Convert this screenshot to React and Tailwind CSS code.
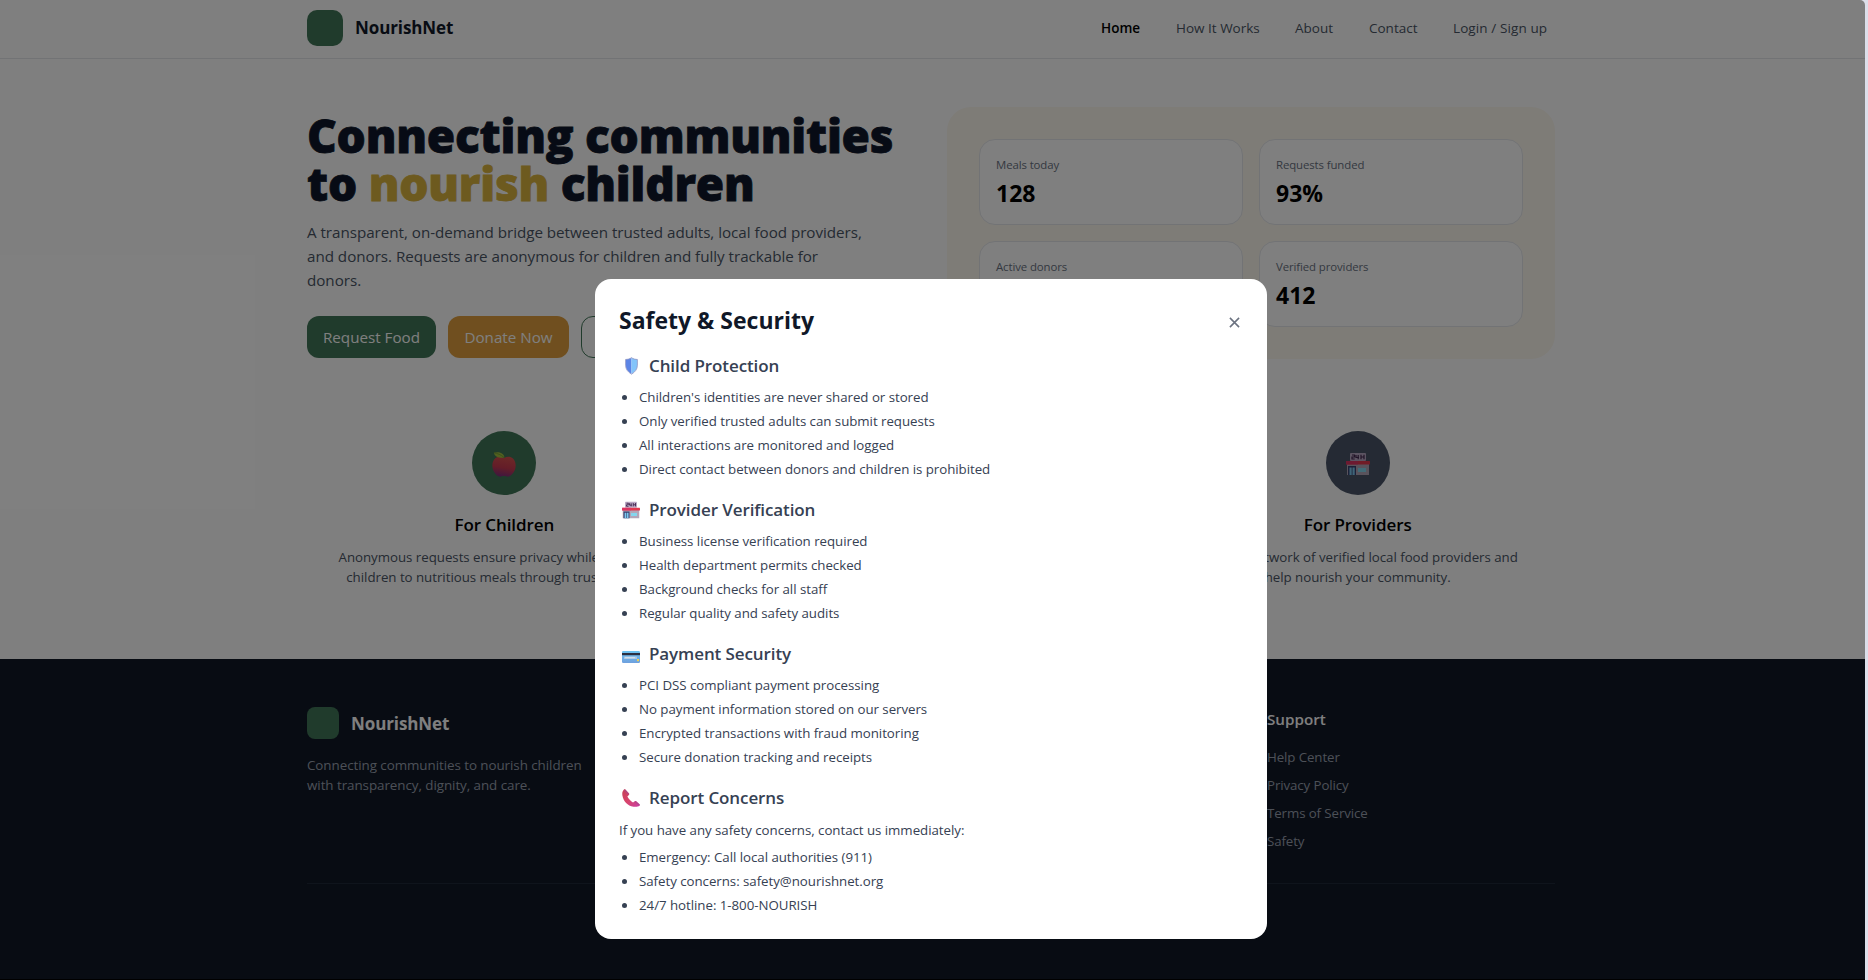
const V = { fontFamily: '"Open Sans", sans-serif' };

function Shield() {
  return (
    <svg viewBox="0 0 18 22" className="h-[18px] w-[15px]">
      <path d="M9 1C7 2.500 4 3 2 3v7c0 5 3 8 7 10.500z" fill="#5c85e6" />
      <path d="M9 1c2 1.500 5 2 7 2v7c0 5-3 8-7 10.500z" fill="#83c4fa" />
      <path d="M9 .8C7 2.500 4 3 1.800 3v7c0 5 3 8.500 7.200 11 4.200-2.500 7.200-6 7.200-11V3C14 3 11 2.500 9 .8z" fill="none" stroke="#8c93c4" strokeWidth="1" />
    </svg>
  );
}

function Store({ className }) {
  return (
    <svg viewBox="0 0 24 24" className={className}>
      <rect x="4" y="1" width="16" height="8" rx="1" fill="#b9a9c4" />
      <path d="M6 3h2.500v2H6v2h2.700M10 3v2.500h3M12.200 3v4.200M15 2.700v4.500M18 2.700v4.500M15 5h3" fill="none" stroke="#43264f" strokeWidth="1.200" />
      <rect x="1" y="11" width="22" height="12" fill="#b3a6b8" />
      <rect x="0" y="9" width="24" height="3.600" rx=".5" fill="#e2384f" />
      <path d="M0 9h12v3.600H0z" fill="#d9346b" opacity=".7" />
      <rect x="2" y="14" width="8" height="9" fill="#39406f" />
      <path d="M3.500 15.500h2.200V23H3.500zM6.500 15.500h2.200V23H6.500z" fill="#7cc8ee" />
      <rect x="12" y="16" width="8" height="4" fill="#84d6ee" />
    </svg>
  );
}

function Card() {
  return (
    <svg viewBox="0 0 18 12" className="mt-[6px] h-[12px] w-[18px]">
      <defs>
        <linearGradient id="cardFill" x1="0" y1="0" x2="0" y2="1">
          <stop offset="0" stopColor="#6cc3f0" />
          <stop offset="1" stopColor="#6fa0de" />
        </linearGradient>
      </defs>
      <rect width="18" height="12" rx="1.200" fill="url(#cardFill)" />
      <rect y="2" width="18" height="2.200" fill="#2b2f40" />
      <rect x="2" y="5.500" width="13" height="2.600" rx=".5" fill="#a9c9e6" />
      <rect x="3" y="6.200" width="10" height="1" fill="#dde3ea" />
      <rect x="15" y="8" width="2" height="2.200" fill="#f0cf52" />
    </svg>
  );
}

function Phone() {
  return (
    <svg viewBox="0 0 18 18" className="h-[18px] w-[18px]">
      <defs>
        <linearGradient id="phoneFill" x1="0" y1="0" x2="1" y2="1">
          <stop offset="0" stopColor="#c53f56" />
          <stop offset=".5" stopColor="#d8446c" />
          <stop offset="1" stopColor="#c93fa4" />
        </linearGradient>
      </defs>
      <path d="M2 .5C.4 2 0 4 .4 6.500c1.200 6 5 10.300 11.100 11.200 2.200.3 4.600.2 6-.9.600-.5.600-1 .1-1.500l-3.300-3c-.5-.5-1-.5-1.500-.100L11 13.400C8.500 12 6.600 10 5.400 7.500l1.500-1.600c.5-.5.500-1 .1-1.500L3.500.6C3 .1 2.500 0 2 .5z" fill="url(#phoneFill)" />
      <path d="M2.500.3l4.600 4.300-1 1.100L2 1.500zM13.500 12l4.200 3.600-.8.900-4.400-3.600z" fill="#a8478f" opacity=".7" />
    </svg>
  );
}

function Apple() {
  return (
    <svg viewBox="0 0 24 25" className="mt-[3px] h-[25px] w-6">
      <defs>
        <linearGradient id="appleFill" x1=".6" y1="0" x2=".4" y2="1">
          <stop offset="0" stopColor="#d9524f" />
          <stop offset=".55" stopColor="#c93a50" />
          <stop offset="1" stopColor="#7e2f7e" />
        </linearGradient>
      </defs>
      <path d="M12 6c3-1.600 6.500-1.800 9 .5 3.500 3.400 3.300 9.500.8 13.500-2 3.300-4.800 5.200-7 4.500-1.800-.6-3.800-.6-5.600 0-2.200.7-5-1.200-7-4.500C-.300 16-.500 9.900 3 6.500 5.500 4.200 9 4.400 12 6z" fill="url(#appleFill)" />
      <path d="M1.800.7C6-.4 11.500 0 12.500 5.600 8 6.200 3 5.600 1.800.7z" fill="#a4c140" />
      <path d="M2 .8c3.500.6 7 2 10 4.600" stroke="#6f9a33" strokeWidth=".8" fill="none" />
    </svg>
  );
}

function Nav({ children, w }) {
  return <span className={"flex whitespace-nowrap " + w}>{children}</span>;
}

function Stat({ label, value }) {
  return (
    <div className="flex h-[86px] flex-col rounded-2xl border border-gray-200 bg-white px-4 pt-4">
      <span className="text-[11.400px] leading-[18px] tracking-[-0.1px] text-gray-500">{label}</span>
      <span className="mt-[3px] text-[23px] leading-8 font-bold text-black">{value}</span>
    </div>
  );
}

function Section({ icon, title, intro, items }) {
  return (
    <section className="flex flex-col">
      <h3 className="flex h-7 items-center text-[17px] font-semibold tracking-[-0.1px] text-gray-700">
        <span className="mr-[6px] flex w-6 justify-center">{icon}</span>
        {title}
      </h3>
      {intro && <p className="mt-2 text-[13.300px] leading-5 tracking-[-0.04px] text-gray-700">{intro}</p>}
      <ul className="mt-2 flex flex-col gap-1">
        {items.map((t) => (
          <li key={t} className="flex h-5 items-center text-[13.300px] tracking-[-0.04px] text-gray-700">
            <span className="-mt-[2px] mr-3 ml-[3px] h-[5px] w-[5px] rounded-full bg-gray-700" />
            {t}
          </li>
        ))}
      </ul>
    </section>
  );
}

function Feature({ bg, icon, title, lines }) {
  return (
    <div className="flex flex-col items-center text-center">
      <div className={"flex h-16 w-16 items-center justify-center rounded-full " + bg}>{icon}</div>
      <h3 className="mt-4 text-[17px] leading-7 font-semibold tracking-[-0.1px] text-black">{title}</h3>
      <p className="mt-2 text-[13.300px] leading-5 tracking-[-0.03px] whitespace-nowrap text-gray-600">
        {lines[0]}
        <br />
        {lines[1]}
      </p>
    </div>
  );
}

function FooterLinks({ title, links }) {
  return (
    <div className="flex flex-col">
      <h4 className="text-[15.200px] leading-6 font-semibold">{title}</h4>
      <ul className="mt-4 flex flex-col gap-2 text-[13.300px] leading-5 tracking-[-0.1px] text-gray-400">
        {links.map((l) => (
          <li key={l}>{l}</li>
        ))}
      </ul>
    </div>
  );
}

export default function App() {
  return (
    <div className="flex h-[980px] w-[1868px] overflow-hidden bg-[#dcdfea]" style={V}>
      <div className="relative flex w-[1865px] shrink-0 flex-col overflow-hidden rounded-tr-[5px] bg-white">
        <header className="flex h-[59px] shrink-0 justify-center border-b border-gray-200 pr-[3px]">
          <div className="flex w-[1248px] items-center justify-between pr-[7px] pb-[3px]">
            <div className="flex items-center gap-3">
              <div className="h-9 w-9 rounded-[10px] bg-[#417658]" />
              <span className="pt-px text-[17px] font-bold tracking-[-0.1px] text-gray-900">NourishNet</span>
            </div>
            <nav className="flex items-center gap-9 pt-px text-[13.500px] text-gray-600">
              <Nav w="w-[39px] font-semibold text-black">Home</Nav>
              <Nav w="w-[83px]">How It Works</Nav>
              <Nav w="w-[38px]">About</Nav>
              <Nav w="w-[48px]">Contact</Nav>
              <Nav w="w-[95px] tracking-[0.1px]">Login / Sign up</Nav>
            </nav>
          </div>
        </header>

        <main className="flex h-[600px] shrink-0 justify-center pr-[3px]">
          <div className="flex w-[1248px] flex-col pt-12">
            <div className="flex justify-between">
              <div className="flex w-[600px] flex-col pt-1">
                <h1 className="text-[46px] leading-[48px] font-extrabold tracking-[-0.25px] whitespace-nowrap text-[#0f172a] [-webkit-text-stroke:0.8px]">
                  Connecting communities
                  <br />
                  to <span className="text-[#dab43f]">nourish</span> children
                </h1>
                <p className="mt-[13px] text-[15.200px] leading-6 tracking-[-0.03px] whitespace-nowrap text-gray-600">
                  A transparent, on-demand bridge between trusted adults, local food providers,
                  <br />
                  and donors. Requests are anonymous for children and fully trackable for
                  <br />
                  donors.
                </p>
                <div className="mt-6 flex gap-3 text-[15.200px] text-white">
                  <div className="flex h-[42px] w-[129px] items-center justify-center rounded-xl bg-[#417658]">Request Food</div>
                  <div className="flex h-[42px] w-[121px] items-center justify-center rounded-xl bg-[#e09f3e]">Donate Now</div>
                  <div className="flex h-[42px] w-[150px] items-center justify-center rounded-xl border border-[#417658] text-[#417658]">Learn More</div>
                </div>
              </div>
              <div className="grid h-[252px] w-[608px] grid-cols-2 content-start gap-4 rounded-3xl bg-[#fcf8ef] p-8">
                <Stat label="Meals today" value="128" />
                <Stat label="Requests funded" value="93%" />
                <Stat label="Active donors" value="1,204" />
                <Stat label="Verified providers" value="412" />
              </div>
            </div>
            <div className="mt-[72px] grid grid-cols-3 gap-8">
              <Feature bg="bg-[#417658]" icon={<Apple />} title="For Children" lines={["Anonymous requests ensure privacy while connecting", "children to nutritious meals through trusted adults."]} />
              <Feature bg="bg-[#e09f3e]" icon={null} title="For Donors" lines={["Fund meals directly and follow", "every donation to its outcome."]} />
              <Feature bg="bg-[#4a5568]" icon={<Store className="mt-[2px] h-6 w-6" />} title="For Providers" lines={["Join our network of verified local food providers and", "help nourish your community."]} />
            </div>
          </div>
        </main>

        <footer className="flex grow justify-center border-b border-black bg-[#111827] pr-[3px] text-white">
          <div className="flex w-[1248px] flex-col pt-12">
            <div className="grid grid-cols-[288px_288px_288px_288px] gap-8">
              <div className="flex flex-col">
                <div className="flex h-8 items-center gap-3">
                  <div className="h-8 w-8 rounded-lg bg-[#417658]" />
                  <span className="pt-[2px] text-[17px] font-bold tracking-[-0.1px]">NourishNet</span>
                </div>
                <p className="mt-4 text-[13.400px] leading-5 tracking-[-0.06px] whitespace-nowrap text-gray-400">
                  Connecting communities to nourish children
                  <br />
                  with transparency, dignity, and care.
                </p>
              </div>
              <FooterLinks title="Platform" links={["Request Food", "Donate", "Providers", "About"]} />
              <FooterLinks title="Company" links={["Our Story", "Impact", "Contact", "Careers"]} />
              <FooterLinks title="Support" links={["Help Center", "Privacy Policy", "Terms of Service", "Safety"]} />
            </div>
            <div className="mt-8 border-t border-gray-800" />
          </div>
        </footer>

        <div className="absolute inset-0 flex items-start justify-center bg-black/50 pt-[279px] pr-[3px]">
          <div className="flex h-[660px] w-[672px] flex-col rounded-2xl bg-white px-6 pt-6">
            <div className="flex h-9 items-center justify-between">
              <h2 className="-mt-[2px] text-[23px] font-bold text-gray-900">Safety &amp; Security</h2>
              <svg viewBox="0 0 12 12" className="mt-[3px] mr-[3px] h-[11px] w-[11px]" stroke="#6b7280" strokeWidth="1.700">
                <path d="M1 1l10 10M11 1L1 11" />
              </svg>
            </div>
            <div className="mt-[13px] flex flex-col gap-4">
              <Section icon={<Shield />} title="Child Protection" items={["Children's identities are never shared or stored", "Only verified trusted adults can submit requests", "All interactions are monitored and logged", "Direct contact between donors and children is prohibited"]} />
              <Section icon={<Store className="h-[18px] w-[18px]" />} title="Provider Verification" items={["Business license verification required", "Health department permits checked", "Background checks for all staff", "Regular quality and safety audits"]} />
              <Section icon={<Card />} title="Payment Security" items={["PCI DSS compliant payment processing", "No payment information stored on our servers", "Encrypted transactions with fraud monitoring", "Secure donation tracking and receipts"]} />
              <Section icon={<Phone />} title="Report Concerns" intro="If you have any safety concerns, contact us immediately:" items={["Emergency: Call local authorities (911)", "Safety concerns: safety@nourishnet.org", "24/7 hotline: 1-800-NOURISH"]} />
            </div>
          </div>
        </div>
      </div>
    </div>
  );
}
